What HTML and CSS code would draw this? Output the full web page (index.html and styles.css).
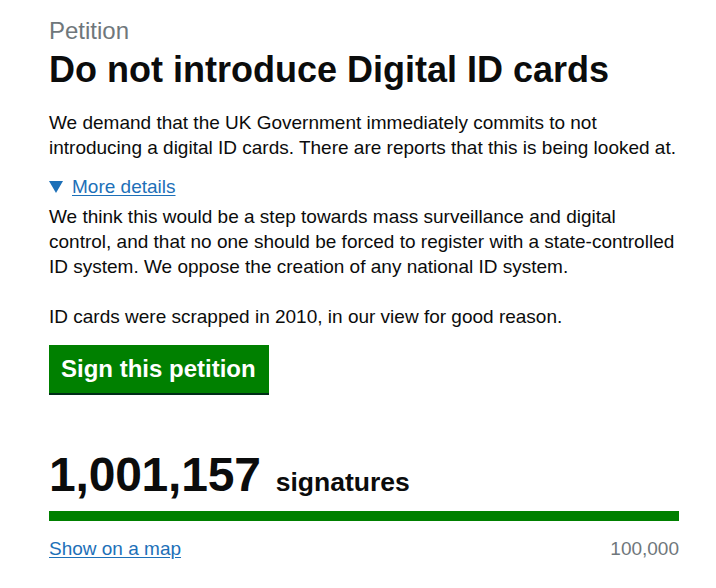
FILE: index.html
```html
<!DOCTYPE html>
<html lang="en">
<head>
<meta charset="utf-8">
<title>Do not introduce Digital ID cards</title>
<link rel="stylesheet" href="styles.css">
</head>
<body>
<main class="page">
  <p class="caption">Petition</p>
  <h1 class="title">Do not introduce Digital ID cards</h1>
  <p class="lede">We demand that the UK Government immediately commits to not introducing a digital ID cards. There are reports that this is being looked at.</p>
  <details class="details" open>
    <summary class="summary"><span class="summary-text">More details</span></summary>
    <div class="details-body">
      <p class="para">We think this would be a step towards mass surveillance and digital control, and that no one should be forced to register with a state-controlled ID system. We oppose the creation of any national ID system.</p>
      <p class="para para-gap">ID cards were scrapped in 2010, in our view for good reason.</p>
    </div>
  </details>
  <a class="button" href="#">Sign this petition</a>
  <div class="count"><span class="count-number">1,001,157</span><span class="count-label">signatures</span></div>
  <div class="bar"><div class="bar-fill" style="width: 100%"></div></div>
  <div class="meta">
    <a class="link" href="#">Show on a map</a>
    <span class="target">100,000</span>
  </div>
</main>
</body>
</html>
```
FILE: styles.css
```css
html, body {
  margin: 0;
  padding: 0;
  background: #ffffff;
}

body {
  font-family: "Liberation Sans", Arial, sans-serif;
  color: #0b0c0c;
}

.page {
  width: 630px;
  padding: 16px 0 0 49px;
}

.caption {
  margin: 0;
  font-size: 24px;
  line-height: 30px;
  color: #6f777b;
}

.title {
  margin: 4px 0 0;
  font-size: 36px;
  line-height: 40px;
  font-weight: 700;
}

.lede {
  margin: 20px 0 0;
  font-size: 19px;
  line-height: 25px;
}

.details {
  margin-top: 14px;
  font-size: 19px;
  line-height: 25px;
}

.summary {
  list-style: none;
  display: flex;
  align-items: center;
  cursor: pointer;
  color: #1d70b8;
}

.summary::-webkit-details-marker {
  display: none;
}

.summary::before {
  content: "";
  display: block;
  width: 0;
  height: 0;
  border-left: 7px solid transparent;
  border-right: 7px solid transparent;
  border-top: 12px solid #1d70b8;
  margin: 1px 9px 0 0;
}

.summary-text {
  text-decoration: underline;
  text-underline-offset: 2px;
}

.details-body {
  margin-top: 5px;
}

.para {
  margin: 0;
}

.para-gap {
  margin-top: 25px;
}

.button {
  display: inline-block;
  margin-top: 16px;
  padding: 9px 13px 9px 12px;
  background: #008000;
  color: #ffffff;
  font-size: 24px;
  line-height: 30px;
  font-weight: 700;
  text-decoration: none;
  box-shadow: 0 2px 0 #002d18;
}

.count {
  display: flex;
  align-items: baseline;
  margin-top: 58px;
  line-height: 1;
}

.count-number {
  font-size: 48px;
  line-height: 48px;
  font-weight: 700;
  letter-spacing: -0.2px;
}

.count-label {
  margin-left: 15px;
  font-size: 26.5px;
  line-height: 27px;
  font-weight: 700;
}

.bar {
  margin-top: 12px;
  height: 10px;
  background: #dee0e2;
}

.bar-fill {
  height: 10px;
  background: #008000;
}

.meta {
  display: flex;
  justify-content: space-between;
  margin-top: 15px;
  font-size: 19px;
  line-height: 25px;
}

.link {
  color: #1d70b8;
  text-decoration: underline;
  text-underline-offset: 2px;
}

.target {
  color: #6f777b;
}
```
